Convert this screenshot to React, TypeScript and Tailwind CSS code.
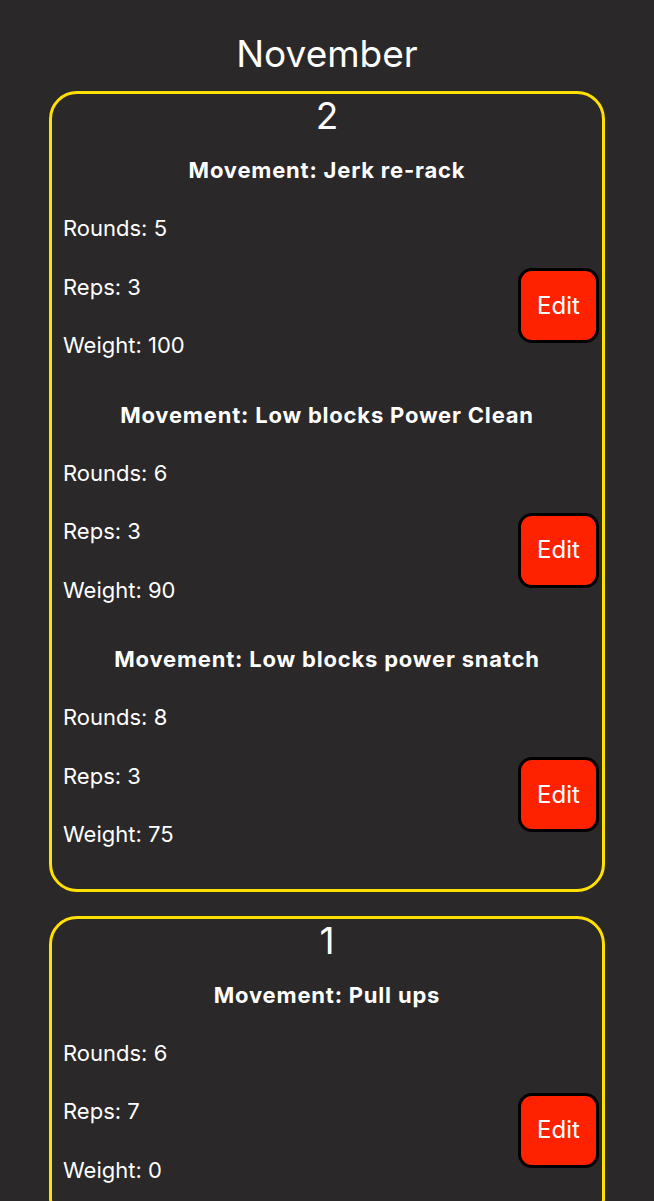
import React from 'react';

type Movement = { name: string; rounds: number; reps: number; weight: number };
type Day = { day: number; movements: Movement[] };

const days: Day[] = [
  {
    day: 2,
    movements: [
      { name: 'Jerk re-rack', rounds: 5, reps: 3, weight: 100 },
      { name: 'Low blocks Power Clean', rounds: 6, reps: 3, weight: 90 },
      { name: 'Low blocks power snatch', rounds: 8, reps: 3, weight: 75 },
    ],
  },
  {
    day: 1,
    movements: [{ name: 'Pull ups', rounds: 6, reps: 7, weight: 0 }],
  },
];

function MovementBlock({ m }: { m: Movement }) {
  return (
    <div className="flex flex-col">
      <h3 className="mt-[11px] text-center text-[22px] font-bold leading-[28px] tracking-[0.8px]">Movement: {m.name}</h3>
      <div className="mt-[30px] flex items-center">
        <div className="flex flex-1 flex-col pl-[8px]">
          <p className="mb-[30.5px] text-[22px] leading-[28px]">Rounds: {m.rounds}</p>
          <p className="mb-[30.5px] text-[22px] leading-[28px]">Reps: {m.reps}</p>
          <p className="mb-[30.5px] text-[22px] leading-[28px]">Weight: {m.weight}</p>
        </div>
        <button className="mt-[8px] flex h-[75px] w-[81px] shrink-0 items-center justify-center rounded-[14px] border-[3px] border-black bg-[#ff2200] text-[24px] text-white">
          Edit
        </button>
      </div>
    </div>
  );
}

export default function App() {
  return (
    <div
      className="min-h-[1201px] bg-[#2a2829] px-[49px] pt-[30px] text-white"
      style={{ fontFamily: 'Inter, "Noto Sans", sans-serif' }}
    >
      <h1 className="text-center text-[37px] leading-[48px]">November</h1>
      <div className="mt-[13px] flex flex-col gap-[24px]">
        {days.map((d) => (
          <div key={d.day} className="rounded-[28px] border-[3px] border-[#ffe000] px-[3px] pt-[2px] pb-[10px]">
            <div className="text-center text-[37px] leading-[40px]">{d.day}</div>
            <div className="mt-[9px]">
              {d.movements.map((m) => (
                <MovementBlock key={m.name} m={m} />
              ))}
            </div>
          </div>
        ))}
      </div>
    </div>
  );
}
